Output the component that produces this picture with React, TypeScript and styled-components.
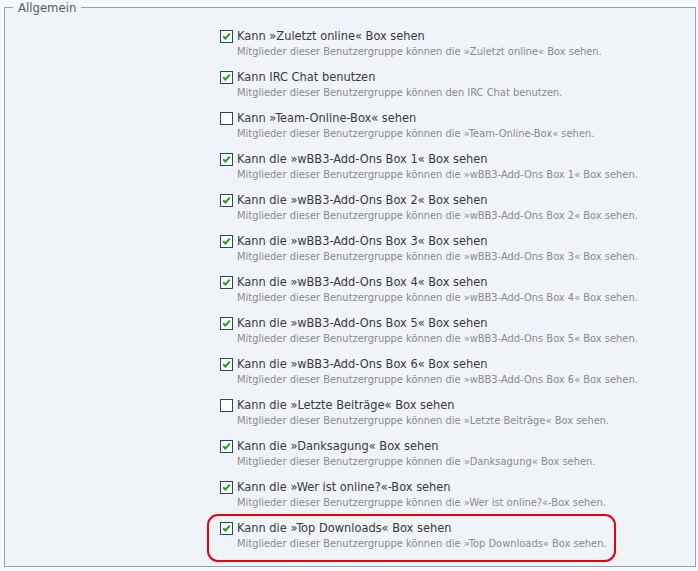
import React from "react";
import styled, { createGlobalStyle } from "styled-components";

const Global = createGlobalStyle`
  html, body { margin: 0; padding: 0; background: #f7f9fc; }
  body { font-family: "DejaVu Sans Condensed", "DejaVu Sans", sans-serif; }
`;

const Page = styled.div`
  width: 698px;
  height: 571px;
  box-sizing: border-box;
  padding: 0 2px 0 4px;
  overflow: hidden;
`;

const Fieldset = styled.fieldset`
  margin: 0;
  border: 1px solid #8fa3b8;
  background: #f0f4f9;
  padding: 13px 0 15px 0;
  min-inline-size: 0;
  height: 567px;
  box-sizing: border-box;
`;

const Legend = styled.legend`
  margin-left: 8px;
  padding: 0 5px;
  font-size: 13px;
  line-height: 15px;
  color: #5a5a5a;
  font-family: "DejaVu Sans Condensed", "DejaVu Sans", sans-serif;
`;

const List = styled.div`
  display: flex;
  flex-direction: column;
  gap: 10px;
  padding-left: 215px;
`;

const Row = styled.div<{ $marked?: boolean }>`
  position: relative;
  display: grid;
  grid-template-columns: 13px auto;
  column-gap: 4px;
  align-items: center;
  ${(p) =>
    p.$marked
      ? `&::after {
    content: "";
    position: absolute;
    left: -13px;
    top: -6px;
    width: 405px;
    height: 44px;
    border: 2px solid #e8000d;
    border-radius: 11px;
    pointer-events: none;
  }`
      : ""}
`;

const Label = styled.span`
  font-size: 12.7px;
  line-height: 16px;
  color: #3a3a3a;
`;

const Desc = styled.span`
  grid-column: 2;
  font-size: 11px;
  line-height: 15px;
  color: #8a8a8a;
`;

const Box = styled.span`
  width: 13px;
  height: 13px;
  box-sizing: border-box;
  border: 1px solid #1c4a72;
  background: #fff;
  display: flex;
  align-items: center;
  justify-content: center;
`;

const Check = ({ on }: { on: boolean }) => (
  <Box>
    {on && (
      <svg width="9" height="9" viewBox="0 0 9 9">
        <path d="M1.2 4.3 L3.4 6.6 L7.8 1.6" fill="none" stroke="#1f9a1f" strokeWidth="2" />
      </svg>
    )}
  </Box>
);

const items: { label: string; desc: string; on: boolean }[] = [
  { label: "Kann »Zuletzt online« Box sehen", desc: "Mitglieder dieser Benutzergruppe können die »Zuletzt online« Box sehen.", on: true },
  { label: "Kann IRC Chat benutzen", desc: "Mitglieder dieser Benutzergruppe können den IRC Chat benutzen.", on: true },
  { label: "Kann »Team-Online-Box« sehen", desc: "Mitglieder dieser Benutzergruppe können die »Team-Online-Box« sehen.", on: false },
  ...[1, 2, 3, 4, 5, 6].map((n) => ({
    label: `Kann die »wBB3-Add-Ons Box ${n}« Box sehen`,
    desc: `Mitglieder dieser Benutzergruppe können die »wBB3-Add-Ons Box ${n}« Box sehen.`,
    on: true,
  })),
  { label: "Kann die »Letzte Beiträge« Box sehen", desc: "Mitglieder dieser Benutzergruppe können die »Letzte Beiträge« Box sehen.", on: false },
  { label: "Kann die »Danksagung« Box sehen", desc: "Mitglieder dieser Benutzergruppe können die »Danksagung« Box sehen.", on: true },
  { label: "Kann die »Wer ist online?«-Box sehen", desc: "Mitglieder dieser Benutzergruppe können die »Wer ist online?«-Box sehen.", on: true },
  { label: "Kann die »Top Downloads« Box sehen", desc: "Mitglieder dieser Benutzergruppe können die »Top Downloads« Box sehen.", on: true },
];

export default function App() {
  return (
    <Page>
      <Global />
      <Fieldset>
        <Legend>Allgemein</Legend>
        <List>
          {items.map((it, i) => (
            <Row key={i} $marked={i === items.length - 1}>
              <Check on={it.on} />
              <Label>{it.label}</Label>
              <Desc>{it.desc}</Desc>
            </Row>
          ))}
        </List>
      </Fieldset>
    </Page>
  );
}
